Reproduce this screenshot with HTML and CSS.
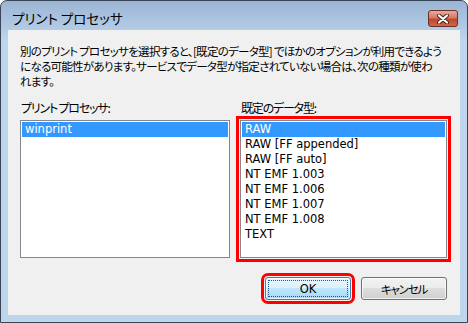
FILE: index.html
```html
<!DOCTYPE html>
<html lang="ja">
<head>
    <meta charset="UTF-8">
    <title>プリント プロセッサ</title>
    <link rel="stylesheet" href="styles.css">
</head>
<body>

    <div class="janela">
        <div class="barra">
            <div class="titulo">プリント プロセッサ</div>
            <div class="fechar">
                <svg width="14" height="10" viewBox="0 0 14 10">
                    <path d="M3 1.5 L11 8.5 M11 1.5 L3 8.5" stroke="#4a2018" stroke-width="4" stroke-linecap="round"/>
                    <path d="M3 1.5 L11 8.5 M11 1.5 L3 8.5" stroke="#ffffff" stroke-width="2.2" stroke-linecap="round"/>
                </svg>
            </div>
        </div>

        <div class="cliente">
            <p class="descricao">別のプリント プロセッサを選択すると、[既定のデータ型] でほかのオプションが利用できるよう<br>になる可能性があります。サービスでデータ型が指定されていない場合は、次の種類が使わ<br>れます。</p>

            <div class="colunas">
                <div class="coluna">
                    <div class="rotulo">プリント プロセッサ:</div>
                    <ul class="lista">
                        <li class="selecionado">winprint</li>
                    </ul>
                </div>
                <div class="coluna">
                    <div class="rotulo">既定のデータ型:</div>
                    <ul class="lista destaque">
                        <li class="selecionado">RAW</li>
                        <li>RAW [FF appended]</li>
                        <li>RAW [FF auto]</li>
                        <li>NT EMF 1.003</li>
                        <li>NT EMF 1.006</li>
                        <li>NT EMF 1.007</li>
                        <li>NT EMF 1.008</li>
                        <li>TEXT</li>
                    </ul>
                </div>
            </div>

            <div class="botoes">
                <button class="botao padrao destaque">OK</button>
                <button class="botao kana">キャンセル</button>
            </div>
        </div>
    </div>

</body>
</html>
```

FILE: styles.css
```css
* {
    margin: 0;
    padding: 0;
    box-sizing: border-box;
    font-family: "Noto Sans CJK JP", "Noto Sans", sans-serif;
    font-feature-settings: "palt";
}

body {
    background: #ffffff;
    width: 468px;
    height: 323px;
    overflow: hidden;
}

.janela {
    width: 468px;
    height: 323px;
    border: 1px solid #3a4656;
    border-radius: 7px 7px 0 0;
    background: linear-gradient(#9ab5d4, #b4cce6 29px, #bfd5ec 40px, #bfd5ec);
    padding: 0 7px 7px 7px;
    display: flex;
    flex-direction: column;
}

.barra {
    height: 29px;
    display: flex;
    justify-content: space-between;
    align-items: flex-start;
}

.titulo {
    margin-top: 9px;
    padding-left: 4px;
    font-size: 13.5px;
    line-height: 17px;
    color: #000;
}

.fechar {
    margin-top: 9px;
    margin-right: 2px;
    width: 30px;
    height: 17px;
    border: 1px solid #6b2e24;
    border-radius: 3px;
    background: linear-gradient(#e9a99a, #d67a66 45%, #c2462c 55%, #d0654c);
    display: flex;
    align-items: center;
    justify-content: center;
}

.cliente {
    flex: 1;
    background: #f0f0f0;
    padding: 14px 13px 15px 12px;
    display: flex;
    flex-direction: column;
}

.descricao {
    font-size: 11.5px;
    line-height: 15px;
    letter-spacing: -0.72px;
    height: 45px;
    color: #000;
    white-space: nowrap;
}

.colunas {
    margin-top: 11px;
    display: grid;
    grid-template-columns: 210px 207px;
    column-gap: 10px;
}

.rotulo {
    font-size: 12px;
    line-height: 15px;
    letter-spacing: -1.2px;
    margin-bottom: 5px;
    padding-left: 1px;
    white-space: nowrap;
}

.lista {
    list-style: none;
    height: 138px;
    background: #fff;
    border: 1px solid #828790;
    padding: 1px;
}

.lista li {
    height: 15px;
    line-height: 15px;
    font-family: "DejaVu Sans", sans-serif;
    font-size: 11.5px;
    padding-left: 3px;
    color: #000;
    white-space: nowrap;
}

.lista li.selecionado {
    background: #3399ff;
    color: #fff;
}

.destaque {
    outline: 3px solid #ff0000;
    outline-offset: 1px;
    border-radius: 2px;
}

.lista.destaque {
    border-radius: 0;
}

.botoes {
    margin-top: 19px;
    display: flex;
    justify-content: flex-end;
    gap: 10px;
}

.botao {
    position: relative;
    width: 86px;
    height: 23px;
    border: 1px solid #707070;
    border-radius: 3px;
    background: linear-gradient(#f2f2f2, #ebebeb 50%, #dddddd 50%, #cfcfcf);
    box-shadow: inset 0 0 0 1px rgba(255, 255, 255, 0.7);
    font-family: "DejaVu Sans", sans-serif;
    font-size: 11.5px;
    color: #000;
}

.botao.kana {
    font-family: "Noto Sans CJK JP", sans-serif;
    font-size: 11.5px;
    letter-spacing: -1.2px;
}

.botao.padrao {
    border-color: #3c7fb1;
    background: linear-gradient(#eaf6fd, #d9f0fc 50%, #bee6fd 50%, #a7d9f5);
}

.botao.padrao::after {
    content: "";
    position: absolute;
    top: 2px;
    left: 2px;
    right: 2px;
    bottom: 2px;
    border: 1px dotted #1b5b8a;
}
```
